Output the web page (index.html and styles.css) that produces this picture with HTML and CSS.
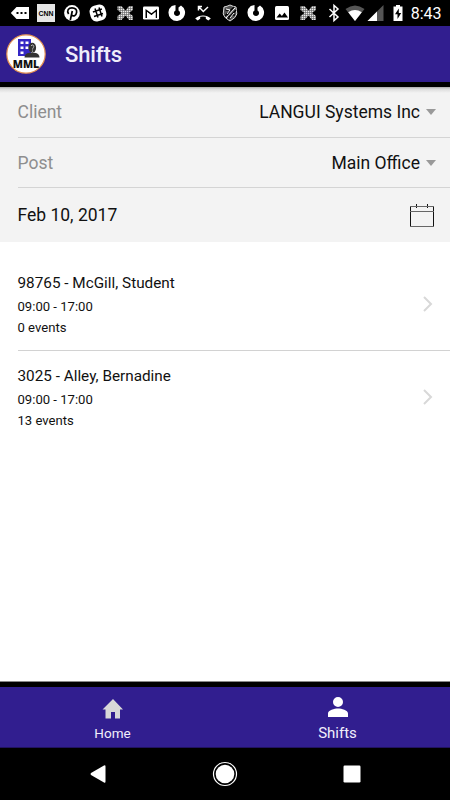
FILE: index.html
```html
<!DOCTYPE html>
<html lang="en">
<head>
<meta charset="utf-8">
<title>Shifts</title>
<link rel="stylesheet" href="styles.css">
</head>
<body>
<svg class="defs" width="0" height="0" aria-hidden="true">
  <defs>
    <pattern id="mesh" width="2" height="2" patternUnits="userSpaceOnUse"><rect width="2" height="2" fill="#999"/><rect width="1" height="1" fill="#eee"/><rect x="1" y="1" width="1" height="1" fill="#777"/></pattern>
    <symbol id="ribbon" viewBox="0 0 20 20"><path d="M2.500 3h4l4 4.500L14 3h4v4l-4 3 4 3v4h-4l-3.500-4.500L6.500 17h-4v-4l4-3-4-3z" fill="url(#mesh)"/></symbol>
    <symbol id="flame" viewBox="0 0 20 20"><path d="M4.800 3 8.500 2v5.500a3 3 0 1 0 3 0V4.500L14 2.500A8.300 8.300 0 1 1 4.800 3z" fill="#fff"/></symbol>
    <symbol id="chevron" viewBox="0 0 12 18"><path d="M2 2l7 7-7 7" fill="none" stroke="#d8d8d8" stroke-width="2"/></symbol>
  </defs>
</svg>
<div class="screen">
  <div class="status">
    <div class="notifications">
      <svg viewBox="0 0 20 20"><path d="M0.800 10 6.500 4H19v12H6.500z" fill="#fff"/><path d="M6.500 9h2v2h-2zm4 0h2v2h-2zm4 0h2v2h-2z"/></svg>
      <svg viewBox="0 0 20 20"><rect x="1" y="1" width="18" height="18" fill="#e6e6e6"/><text class="news" x="10" y="13" text-anchor="middle" textLength="15" lengthAdjust="spacingAndGlyphs">CNN</text></svg>
      <svg viewBox="0 0 20 20"><circle cx="10" cy="10" r="7.900" fill="#fff"/><path d="M6.600 11C4.400 7.500 6.500 4.800 10 4.800c3.400 0 5 2 4.600 4.600-.5 3.500-3.300 4.500-4.800 2.600M10.300 8 8.300 17" fill="none" stroke="#000" stroke-width="1.700"/></svg>
      <svg viewBox="0 0 20 20"><rect x="2" y="2" width="16" height="16" rx="6" transform="rotate(-15 10 10)" fill="#fff"/><path d="m7 5.500 3 9m1-10 3 9M4.900 9l9-3M6 13.500l9-3" stroke="#000" stroke-width="1.500"/></svg>
      <svg viewBox="0 0 20 20"><use href="#ribbon"/></svg>
      <svg viewBox="0 0 20 20"><rect x="2" y="3.500" width="16" height="13" rx="1.300" fill="#fff"/><path d="M4.500 15V6l6 4.300 5.500-4.300v9h-1.500V9l-4 3.300L6 9v6z"/><path d="M6 9l4.500 3.500L14.500 9v6H6z" fill="#fff"/></svg>
      <svg viewBox="0 0 20 20"><use href="#flame"/></svg>
      <svg viewBox="0 0 20 20"><path d="M2.200 15.500c4-4 11.600-4 15.600 0l-2.500 2-2.500-1.700v-2q-2.800-.8-5.600 0v2l-2.500 1.700z" fill="#fff"/><path d="M5.500 7.500v-4h3.500M6 4l4.300 4.500L15 4" fill="none" stroke="#fff" stroke-width="1.500"/></svg>
      <svg viewBox="0 0 20 20"><path d="M4 4q3-.5 6-2 3 1.500 6 2l.8 7q-1 4-6.800 7-5.800-3-6.800-7z" fill="#555" stroke="#ddd"/><path d="m5 13 9-9M8 16l8-9M5.500 7h3m-2 3 4 5M12 12h3" stroke="#000" stroke-width="1.400"/><path d="m6 15 9-10M6 6l4 1-3 4m7-1-4 5" fill="none" stroke="#fff"/></svg>
      <svg viewBox="0 0 20 20"><use href="#flame"/></svg>
      <svg viewBox="0 0 20 20"><rect x="3" y="3" width="14" height="14" rx="1.500" fill="#fff"/><path d="m4.500 14.500 3.200-4 2.200 2.600 2.600-3.600 3.500 5z"/></svg>
      <svg viewBox="0 0 20 20"><use href="#ribbon"/></svg>
    </div>
    <div class="system">
      <svg viewBox="0 0 20 20"><path d="M5.500 6 14 14l-4 3.500v-15L14 6l-8.500 8" fill="none" stroke="#fff" stroke-width="1.500"/></svg>
      <svg viewBox="0 0 20 20"><path d="M.5 6Q10-1 19.500 6L10 18z" fill="#555"/><path d="M3.200 9.200q6.800-4.500 13.600 0L10 18z" fill="#fff"/></svg>
      <svg viewBox="0 0 20 20"><path d="M17.500 2v16h-16z" fill="#555"/><path d="M11 8.500V18H1.500z" fill="#fff"/></svg>
      <svg viewBox="0 0 20 20"><path d="M5.500 3.500H8V2h4v1.500h2.500V18h-9z" fill="#fff"/><path d="M10.800 5.500 7 11.300h2.500V16l3.700-6h-2.400z"/></svg>
    </div>
    <span class="clock">8:43</span>
  </div>
  <header class="header">
    <svg class="logo" viewBox="0 0 40 40"><circle cx="20" cy="20" r="19.200" fill="#fff" stroke="#e59150" stroke-width="1.200"/><path d="M12 5h13v17H12z" fill="#3427c5"/><path d="M14.500 7.500h3V10h-3zm5 0h3V10h-3zm-5 5h3V15h-3zm5 0h3V15h-3zm-5 5h3V20h-3z" fill="#fff"/><path d="M18.500 23.500q0-4 5-4.800h5q5 .8 5 4.800z" fill="#333"/><ellipse cx="26.300" cy="13.800" rx="3.800" ry="5" fill="#333"/><path d="M25 12q1.200-2 2.500-.5c1 1.800-1 2.300-1 4m0 1v1.200" fill="none" stroke="#bbb"/><text class="logo-text" x="20" y="33.600" text-anchor="middle" textLength="26.500" lengthAdjust="spacingAndGlyphs">MML</text></svg>
    <h1 class="title">Shifts</h1>
  </header>
  <main class="content">
    <section class="filters">
      <div class="field"><span class="label">Client</span><span class="value">LANGUI Systems Inc</span><i class="caret"></i></div>
      <div class="field"><span class="label">Post</span><span class="value">Main Office</span><i class="caret"></i></div>
      <div class="field date"><span>Feb 10, 2017</span><svg class="calendar" viewBox="0 0 24 24"><path d="M.5 2v21M23.500 2v21M6.500 0v4M17.500 0v4" stroke="#111"/><path d="M0 2.500h24M0 7.500h24M0 22.500h24" stroke="#666"/></svg></div>
    </section>
    <section class="shifts">
      <article class="shift"><div><h2 class="name">98765 - McGill, Student</h2><p>09:00 - 17:00</p><p>0 events</p></div><svg class="chevron"><use href="#chevron"/></svg></article>
      <article class="shift"><div><h2 class="name">3025 - Alley, Bernadine</h2><p>09:00 - 17:00</p><p>13 events</p></div><svg class="chevron"><use href="#chevron"/></svg></article>
    </section>
  </main>
  <nav class="tabs">
    <div class="tab home"><svg viewBox="0 0 24 24"><path d="M10 21.500v-6.500h4v6.500h5v-9h3L12 2 1.500 12.500h3v9z" fill="#d8d8d8"/></svg><span>Home</span></div>
    <div class="tab active"><svg viewBox="0 0 24 24"><path d="M12 12a5 5 0 1 0 0-10 5 5 0 0 0 0 10zm0 1.500c-3.600 0-10 1.500-10 5V22h20v-3.500c0-3.500-6.400-5-10-5z" fill="#fff"/></svg><span>Shifts</span></div>
  </nav>
  <div class="android">
    <svg viewBox="0 0 28 28"><path d="M7 13 20 5.500q1.500-.7 1.500 1v15q0 1.700-1.500 1L7 15q-1-1 0-2z" fill="#fff"/></svg>
    <svg viewBox="0 0 28 28"><circle cx="14" cy="14" r="11.500" fill="none" stroke="#fff" stroke-width="1.200"/><circle cx="14" cy="14" r="9.300" fill="#fff"/></svg>
    <svg viewBox="0 0 28 28"><rect x="5.500" y="5.500" width="17" height="17" rx="1.200" fill="#fff"/></svg>
  </div>
</div>
</body>
</html>
```
FILE: styles.css
```css
* { box-sizing: border-box; }
body { margin: 0; font-family: Roboto, sans-serif; color: #111; }
h1, h2, p { margin: 0; font-weight: 400; }
svg { display: block; flex: none; }
.defs { position: absolute; }
.screen { width: 450px; height: 800px; display: flex; flex-direction: column; background: #fff; overflow: hidden; }
.status { height: 26px; flex: none; display: flex; align-items: center; background: #000; padding-left: 9.5px; }
.notifications { display: flex; gap: 6.250px; }
.notifications svg, .system svg { width: 20px; height: 20px; }
.system { display: flex; gap: 1.300px; margin-left: 5.500px; }
.clock { color: #fff; font-size: 16px; line-height: 26px; margin-left: 3px; padding-top: 1px; }
.news { font: 700 7.500px "Liberation Sans", sans-serif; }
.header { height: 61px; flex: none; display: flex; align-items: center; gap: 19px; padding-left: 6px; background: #311e8f; border-bottom: 5px solid #000; }
.logo { width: 40px; height: 40px; }
.logo-text { font: 800 10.500px "Open Sans", sans-serif; fill: #111; }
.title { font-size: 22px; font-weight: 500; line-height: 56px; color: #efedfa; padding-top: 2px; letter-spacing: -.1px; }
.content { flex: 1; border-bottom: 1px solid #888; }
.filters { height: 155px; background: linear-gradient(#aaa 0, #dcdcdc 2px, #f3f3f3 6px); padding-left: 17.500px; }
.field { height: 50px; display: flex; align-items: center; border-bottom: 1px solid #d4d4d4; padding-right: 14px; font-size: 17.500px; }
.field:first-child { height: 51px; }
.filters .date { height: 54px; border-bottom: 0; padding-right: 16px; justify-content: space-between; }
.label { color: #8e8e8e; }
.value { margin-left: auto; }
.caret { border: 5px solid transparent; border-top: 6px solid #999; border-bottom: 0; margin-left: 6px; }
.calendar { width: 24px; height: 24px; margin-top: 2px; }
.shifts { padding: 15px 0 0 17.500px; }
.shift { height: 93px; display: flex; align-items: center; justify-content: space-between; padding-right: 16px; font-size: 13.100px; line-height: 21px; }
.shift + .shift { border-top: 1px solid #d2d2d2; }
.shift + .shift > div { margin-top: -1px; }
.name { font-size: 15.300px; line-height: 26px; }
.chevron { width: 12px; height: 18px; }
.tabs { height: 66px; flex: none; display: flex; background: #311e8f; border-top: 5px solid #000; border-bottom: 1px solid #21135f; }
.tab { flex: 1; display: flex; flex-direction: column; align-items: center; color: #f1effc; font-size: 13.500px; line-height: 18px; }
.tab svg { width: 24px; height: 24px; }
.home { padding-top: 10px; }
.home span { margin-top: 3px; }
.active { font-size: 15px; padding-top: 8px; }
.active span { margin-top: 5px; }
.android { height: 52px; flex: none; display: grid; grid-template-columns: repeat(3, 28px); justify-content: space-between; padding: 12px 84px; background: #000; }
```
